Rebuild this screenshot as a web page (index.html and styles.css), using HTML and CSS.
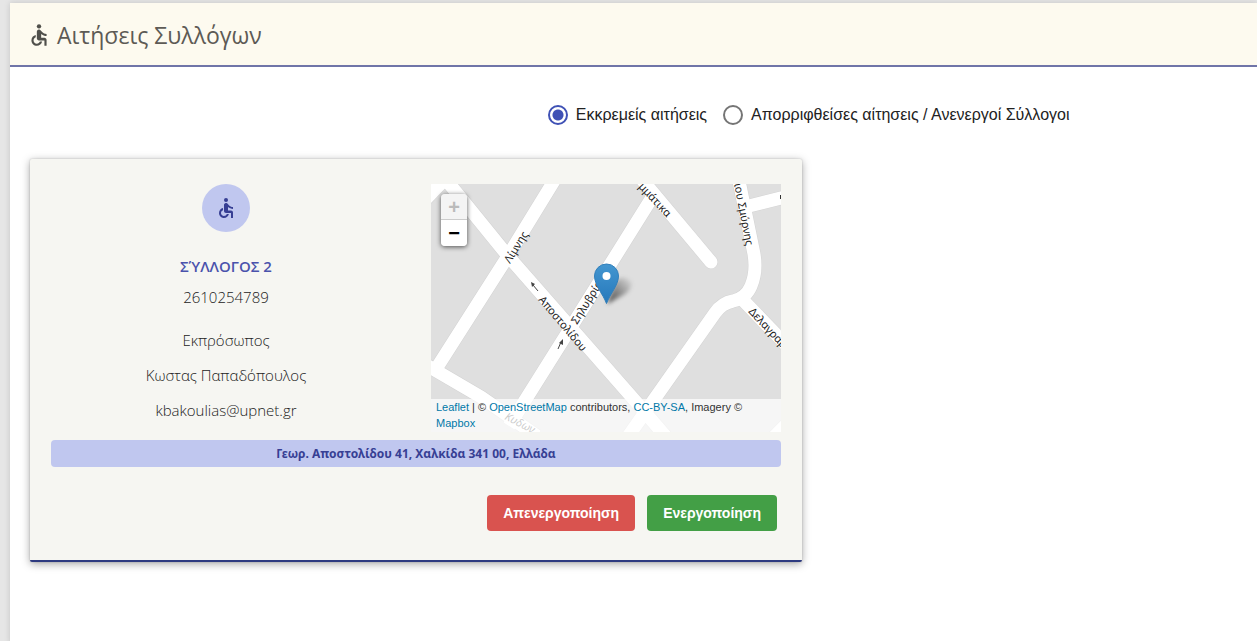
FILE: index.html
```html
<!DOCTYPE html>
<html lang="el">
<head>
<meta charset="utf-8">
<title>Αιτήσεις Συλλόγων</title>
<link rel="stylesheet" href="styles.css">
</head>
<body>
<svg class="sprite" aria-hidden="true">
  <symbol id="accessible" viewBox="0 0 24 24">
    <circle cx="12" cy="4" r="2"/>
    <path d="M19 13v-2c-1.54.02-3.09-.75-4.07-1.83l-1.29-1.43c-.17-.19-.38-.34-.61-.45-.01 0-.01-.01-.02-.01H13c-.35-.2-.75-.3-1.19-.26C10.76 7.11 10 8.04 10 9.09V15c0 1.1.9 2 2 2h5v5h2v-5.500c0-1.100-.9-2-2-2h-3v-3.450c1.290 1.070 3.250 1.940 5 1.950zm-6.170 5c-.410 1.160-1.520 2-2.830 2-1.660 0-3-1.340-3-3 0-1.310.840-2.410 2-2.830V12.100c-2.280.460-4 2.480-4 4.900 0 2.760 2.240 5 5 5 2.420 0 4.440-1.720 4.900-4h-2.070z"/>
  </symbol>
</svg>
<main class="panel">
  <header class="panel-header">
    <svg class="header-icon" aria-hidden="true"><use href="#accessible"/></svg>
    <h1 class="title">Αιτήσεις Συλλόγων</h1>
  </header>
  <div class="panel-body">
    <div class="filters" role="radiogroup" aria-label="Αιτήσεις">
      <label class="filter"><input class="radio" type="radio" name="status" checked>Εκκρεμείς αιτήσεις</label>
      <label class="filter"><input class="radio" type="radio" name="status">Απορριφθείσες αίτησεις / Ανενεργοί Σύλλογοι</label>
    </div>
    <article class="card">
      <div class="card-main">
        <div class="club">
          <span class="avatar"><svg class="avatar-icon" aria-hidden="true"><use href="#accessible"/></svg></span>
          <h2 class="club-name">ΣΎΛΛΟΓΟΣ 2</h2>
          <p class="phone">2610254789</p>
          <p class="detail">Εκπρόσωπος</p>
          <p class="detail">Κωστας Παπαδόπουλος</p>
          <p class="detail">kbakoulias@upnet.gr</p>
        </div>
        <div class="map">
          <svg class="map-canvas" viewBox="0 0 350 248" preserveAspectRatio="xMidYMid slice">
            <defs>
              <linearGradient id="pin" x1="0" y1="0" x2="0" y2="1">
                <stop offset="0" stop-color="#4396d0"/><stop offset="1" stop-color="#2678bb"/>
              </linearGradient>
              <linearGradient id="shade" x1="0" y1="1" x2="1" y2="0">
                <stop offset="0" stop-color="#000" stop-opacity=".7"/><stop offset="1" stop-color="#000" stop-opacity="0"/>
              </linearGradient>
              <filter id="soft" x="-50%" y="-50%" width="200%" height="200%"><feGaussianBlur stdDeviation="2"/></filter>
              <g id="streets" fill="none" stroke-linejoin="round">
                <path d="M12-8 77 72 206 219 236 254"/>
                <path d="M17-8-8 18"/>
                <path d="M126-8 77 72 5 185"/>
                <path d="M-8 179 50 213 106 252"/>
                <path d="M222 12 137 148 78 242"/>
                <path d="M208-8 280 78" stroke-linecap="round"/>
                <path d="M307-8 323 70Q326 88 320 102Q315 114 302 117Q291 119 284 129L196 254"/>
                <path d="M314 23 358 12"/>
                <path d="M308 112 358 164"/>
                <path d="M342 254 358 238"/>
              </g>
            </defs>
            <rect width="350" height="248" fill="#dfdfdf"/>
            <use href="#streets" stroke="#d3d3d3" stroke-width="14"/>
            <use href="#streets" stroke="#fff" stroke-width="13"/>
            <g class="street-label">
              <text transform="translate(79 80) rotate(-58)">Λίμνης</text>
              <text transform="translate(107 116) rotate(50)">Αποστολίδου</text>
              <text transform="translate(146 141) rotate(-58)">Σηλυβρίας</text>
              <text transform="translate(207 3) rotate(47)">μμάτικα</text>
              <text transform="translate(303 0) rotate(79)">ιου Σμύρνης</text>
              <text transform="translate(317 128) rotate(47)">Δελαγραμ</text>
              <text class="faint" transform="translate(73 235) rotate(27)">Κυδων</text>
            </g>
            <path d="M349.500 11v4" stroke="#333"/>
            <g stroke="#444" fill="#444" stroke-width="1">
              <path d="M107 107 102 101"/><path d="M100 98 104 100 101 103Z" stroke="none"/>
              <path d="M127 165 130 158"/><path d="M132 155 132 161 128 159Z" stroke="none"/>
            </g>
            <path d="M176 120 184 98Q191 90 200 97Q203 103 194 110Z" fill="url(#shade)" filter="url(#soft)"/>
            <path d="M175.500 119.500C172 110 163.500 101 163.500 92A12 12 0 0 1 187.500 92C187.500 101 179 110 175.500 119.500Z" fill="url(#pin)" stroke="#3280bb"/>
            <circle cx="175.500" cy="92" r="4" fill="#fff"/>
          </svg>
          <div class="zoom">
            <button class="zoom-button" type="button" aria-label="Zoom in" disabled>+</button>
            <button class="zoom-button" type="button" aria-label="Zoom out">−</button>
          </div>
          <div class="attribution"><a href="#leaflet">Leaflet</a> | © <a href="#osm">OpenStreetMap</a> contributors, <a href="#license">CC-BY-SA</a>, Imagery © <a href="#mapbox">Mapbox</a></div>
        </div>
      </div>
      <p class="address">Γεωρ. Αποστολίδου 41, Χαλκίδα 341 00, Ελλάδα</p>
      <div class="actions">
        <button class="action deactivate" type="button">Απενεργοποίηση</button>
        <button class="action activate" type="button">Ενεργοποίηση</button>
      </div>
    </article>
  </div>
</main>
</body>
</html>
```
FILE: styles.css
```css
* { box-sizing: border-box; }
body {
  margin: 0;
  padding: 3px 0 0 10px;
  background: #e6e6e6;
  font-family: "Open Sans", "Noto Sans", sans-serif;
  overflow: hidden;
}
h1, h2, p { margin: 0; }
.sprite { position: absolute; width: 0; height: 0; }
.panel {
  min-height: 100vh;
  background: #fff;
  box-shadow: 0 0 6px rgba(0, 0, 0, .15);
}
.panel-header {
  display: flex;
  align-items: center;
  gap: 5px;
  height: 64px;
  padding: 2px 16px 0;
  background: #fdfaef;
  border-bottom: 2px solid #7075a8;
}
.header-icon { width: 26px; height: 28px; fill: #4f4f4a; }
.title {
  color: #5d5a55;
  font-size: 23px;
  font-weight: 400;
  line-height: 32px;
}
.panel-body { padding: 36px 20px; }
.filters {
  display: flex;
  gap: 16px;
  padding-left: 42.9%;
  white-space: nowrap;
}
.filter {
  display: flex;
  align-items: center;
  gap: 8px;
  height: 24px;
  color: #222;
  font: 16px/24px "Liberation Sans", Arial, sans-serif;
}
.radio {
  appearance: none;
  width: 20px;
  height: 20px;
  margin: 0;
  border: 2px solid #757575;
  border-radius: 50%;
  background: #fff;
}
.radio:checked {
  border-color: #3f51b5;
  background: radial-gradient(circle, #3f51b5 5px, #fff 6px);
}
.card {
  max-width: 772px;
  margin-top: 32px;
  padding: 25px 21px 29px;
  background: #f6f6f2;
  border-bottom: 2px solid #2d3a80;
  border-radius: 2px;
  box-shadow: 0 2px 8px rgba(0, 0, 0, .35), 0 0 2px rgba(0, 0, 0, .2);
}
.card-main {
  display: grid;
  grid-template-columns: 1fr 1fr;
  gap: 30px;
}
.club {
  display: flex;
  flex-direction: column;
  align-items: center;
  color: #222;
  font-size: 15px;
  font-weight: 300;
  text-align: center;
}
.avatar {
  display: grid;
  place-items: center;
  width: 48px;
  height: 48px;
  border-radius: 50%;
  background: #c0c7ef;
}
.avatar-icon { width: 24px; height: 24px; fill: #373f94; }
.club-name {
  margin-top: 22px;
  color: #4a52ac;
  font-size: 15px;
  font-weight: 600;
  line-height: 24px;
}
.phone { margin: 7px 0 8px; line-height: 24px; }
.detail { margin-top: 11px; line-height: 24px; }
.map {
  position: relative;
  height: 248px;
  overflow: hidden;
}
.map-canvas { display: block; width: 100%; height: 100%; }
.street-label {
  fill: #222;
  font: 11px "Noto Sans", sans-serif;
}
.faint { fill: #555; font-style: italic; }
.zoom {
  position: absolute;
  top: 10px;
  left: 10px;
  width: 26px;
  border-radius: 4px;
  overflow: hidden;
  box-shadow: 0 1px 5px rgba(0, 0, 0, .65);
}
.zoom-button {
  display: block;
  width: 26px;
  height: 26px;
  padding: 0;
  border: 0;
  background: #fff;
  color: #000;
  font: bold 20px/26px "Liberation Sans", Arial, sans-serif;
}
.zoom-button:disabled {
  border-bottom: 1px solid #ccc;
  background: #f4f4f4;
  color: #bbb;
}
.attribution {
  position: absolute;
  right: 0;
  bottom: 0;
  left: 0;
  padding: 0 5px 1px;
  background: rgba(255, 255, 255, .7);
  color: #333;
  font: 11px/16px "Liberation Sans", Arial, sans-serif;
}
.attribution a { color: #0078a8; text-decoration: none; }
.address {
  margin-top: 8px;
  border-radius: 4px;
  background: #c0c7ef;
  color: #373f94;
  font-family: "Noto Sans", "Open Sans", sans-serif;
  font-size: 12px;
  font-weight: 700;
  line-height: 27px;
  text-align: center;
}
.actions {
  display: flex;
  justify-content: flex-end;
  gap: 12px;
  margin-top: 28px;
  padding-right: 4px;
}
.action {
  height: 36px;
  padding: 0 16px;
  border: 0;
  border-radius: 4px;
  color: #fff;
  font: 700 14px/36px "Liberation Sans", Arial, sans-serif;
}
.deactivate { background: #d9534f; }
.activate { background: #439f46; }
```
